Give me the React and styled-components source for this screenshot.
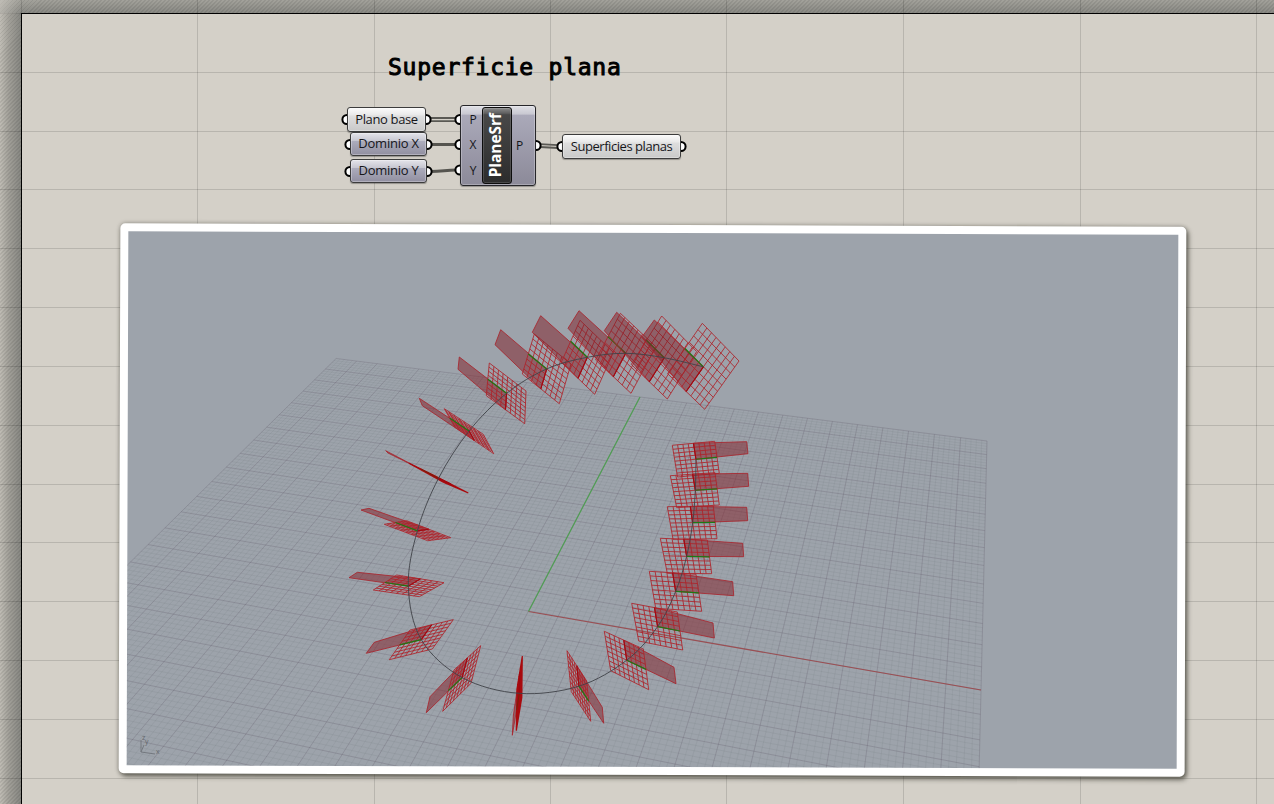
import React from "react";
import styled, { createGlobalStyle, css } from "styled-components";

const GlobalStyle = createGlobalStyle`
  html, body { margin: 0; padding: 0; overflow: hidden; background: #d4d0c8; }
  * { box-sizing: border-box; }
`;

const Canvas = styled.main`
  position: relative;
  width: 1274px;
  height: 804px;
  overflow: hidden;
  background: #d4d0c8;
  font-family: "Open Sans", "Noto Sans", sans-serif;
  color: #16161a;
`;

const hatch = css`
  repeating-linear-gradient(135deg, rgba(0,0,0,0.075) 0 1.4px, rgba(0,0,0,0) 1.4px 2.83px)
`;

const PageEdge = styled.div`
  position: absolute;
  inset: 0;
  display: grid;
  grid-template-columns: 21px 1fr;
  grid-template-rows: 13px 1fr;
`;

const TopMargin = styled.div`
  grid-column: 1 / 3;
  background: ${hatch}, linear-gradient(to bottom, #a3a29b, #888883);
`;

const LeftMargin = styled.div`
  background: ${hatch}, linear-gradient(to right, #c0bdb5, #a3a19a 40%, #868681);
`;

const Sheet = styled.div`
  border: solid #000;
  border-width: 1px 0 0 1px;
`;

const CornerFade = styled.div`
  position: absolute;
  left: 0;
  top: 0;
  width: 21px;
  height: 14px;
  background: linear-gradient(to right, rgba(212, 208, 200, 0.6), rgba(212, 208, 200, 0));
`;

const Overlay = styled.svg`
  position: absolute;
  left: 0;
  top: 0;
`;

const Title = styled.h1`
  position: absolute;
  left: 388px;
  top: 52px;
  margin: 0;
  font: 400 23px/30px "DejaVu Sans Mono", monospace;
  -webkit-text-stroke: 1px #000;
  letter-spacing: 0.75px;
  white-space: pre;
  color: #000;
`;

const silver = "linear-gradient(#fbfbfb, #e9e9e9 30%, #dedede 35%, #c9c9c9)";
const violet = "linear-gradient(#e4e4ea, #c6c6d0 36%, #acacbc 38%, #918fa0)";

const Param = styled.div`
  position: absolute;
  left: ${(p) => p.$x}px;
  top: ${(p) => p.$y}px;
  width: ${(p) => p.$w}px;
  height: ${(p) => p.$h || 25}px;
  display: flex;
  align-items: center;
  justify-content: center;
  padding-bottom: 2px;
  border: 1px solid #3c3c3c;
  border-radius: 3px;
  background: ${(p) => (p.$violet ? violet : silver)};
  box-shadow: inset 0 0 0 1px rgba(255, 255, 255, 0.3), 0 1px 1px rgba(0, 0, 0, 0.3);
  font-size: 13px;
  letter-spacing: ${(p) => p.$track || 0}px;
  white-space: nowrap;
`;

const Component = styled.section`
  position: absolute;
  left: 460px;
  top: 105px;
  width: 76px;
  height: 81px;
  display: grid;
  grid-template-columns: 21px 30px 1fr;
  align-items: stretch;
  padding: 1px 0 1px 0;
  border: 1px solid #26262a;
  border-radius: 3px;
  background: linear-gradient(#e0e0e6, #c9c9d2 10%, #aaa9b9 12%, #8c8a99);
  box-shadow: inset 0 0 0 1px rgba(255, 255, 255, 0.25), 0 1px 1px rgba(0, 0, 0, 0.3);
`;

const Ports = styled.div`
  display: flex;
  flex-direction: column;
  justify-content: space-around;
  align-items: center;
  font-size: 12px;
  line-height: 16px;
  padding-left: ${(p) => (p.$input ? 3 : 0)}px;
  padding-right: ${(p) => (p.$input ? 0 : 8)}px;
`;

const Badge = styled.div`
  display: flex;
  align-items: center;
  justify-content: center;
  padding-right: 3px;
  border: 1px solid #0d0d0d;
  border-radius: 3px;
  background: linear-gradient(#8a8a8a, #606060 7%, #484848 9%, #2c2c2c);
  box-shadow: inset 0 0 0 1px rgba(255, 255, 255, 0.14);
  color: #fff;
`;

const BadgeText = styled.span`
  writing-mode: vertical-rl;
  transform: rotate(180deg);
  font: 700 15.4px/20px "Open Sans", "Noto Sans", sans-serif;
`;

const Frame = styled.figure`
  position: absolute;
  left: 120px;
  top: 225px;
  width: 1066px;
  height: 550px;
  margin: 0;
  border: 8px solid #fff;
  border-radius: 5px;
  background: #9da3ab;
  box-shadow: 2px 3px 5px rgba(30, 30, 20, 0.6), 0 0 4px rgba(30, 30, 20, 0.35);
  transform: translateX(-0.5px) rotate(0.18deg);
`;

const Viewport = styled.svg`
  display: block;
  width: 1050px;
  height: 534px;
`;

/* Projection of the construction plane, one unit being half the grid */
const project = (u, v) => {
  const w = 1 - 0.08657 * u + 0.30553 * v;
  return [
    (528.5 + 367.6 * u + 307 * v) / w,
    (611 + 19.27 * u - 92.7 * v) / w,
  ];
};

const segment = (a, b) =>
  `M${a[0].toFixed(2)} ${a[1].toFixed(2)}L${b[0].toFixed(2)} ${b[1].toFixed(2)}`;

const gridPath = (major) => {
  let d = "";
  for (let i = -70; i <= 70; i++) {
    if ((i % 5 === 0) !== major) continue;
    const t = i / 70;
    d += segment(project(t, -1), project(t, 1));
    d += segment(project(-1, t), project(1, t));
  }
  return d;
};

const MAJOR = gridPath(true);
const MINOR = gridPath(false);

/* m: four mesh corners, s: the two far corners of the shaded face */
const PLANES = [
  { m: [[672.3, 445.3], [714.7, 441.3], [719.3, 473.3], [677.5, 477]], s: [[746.7, 441.7], [748, 453.7]] },
  { m: [[670.3, 475.7], [715, 472.7], [719.3, 505], [676.7, 507.7]], s: [[747.7, 473.3], [748.7, 486.3]] },
  { m: [[667.3, 506.7], [713.3, 506], [717, 538.7], [673, 539.3]], s: [[746.7, 507.3], [747.7, 520.7]] },
  { m: [[660.3, 538.3], [707.3, 540], [711.7, 573.7], [667.3, 573.3]], s: [[742.7, 543.3], [743.7, 556.7]] },
  { m: [[649.3, 571.3], [696, 574.3], [701.7, 611.3], [655.7, 608.3]], s: [[732.7, 581.7], [733.7, 595.7]] },
  { m: [[631.7, 603.3], [677.3, 612], [682.7, 650], [638.7, 641]], s: [[713, 623], [714.3, 638]] },
  { m: [[604.3, 631.3], [643.3, 649], [648.7, 689.7], [610.7, 670.7]], s: [[674, 667.3], [676, 683.7]] },
  { m: [[567, 650.7], [586.7, 681], [590.7, 721.3], [571.3, 691.7]], s: [[602.3, 707.3], [603.7, 723.3]] },
  { m: [[522.3, 656], [517, 689], [516.3, 730.7], [521.8, 697.7]], s: [[513.3, 716], [512.3, 735.3]], thin: true },
  { m: [[480.7, 645.7], [454, 670], [442.7, 711.3], [471, 683.3]], s: [[430, 696.7], [426.3, 712.7]] },
  { m: [[453.3, 619.7], [410, 630], [389.3, 659.7], [432.3, 649]], s: [[374.3, 642.3], [366.3, 653.3]] },
  { m: [[444, 582.7], [396.7, 575], [373.3, 590], [419.3, 596.7]], s: [[357.3, 572.3], [349, 577.7]] },
  { m: [[450.7, 537.7], [406.7, 520.7], [384.3, 524.3], [427.7, 540.7]], s: [[369, 508.3], [361, 510]] },
  { m: [[468.3, 493], [433.3, 475], [409, 463.3], [443.3, 482.3]], s: [[388, 453], [385.7, 450.7]], thin: true },
  { m: [[493.7, 453.7], [455, 427.3], [444.3, 408.7], [483.3, 434.3]], s: [[422.3, 405.7], [419.3, 398.3]] },
  { m: [[524.7, 423.7], [486.3, 395.7], [489.3, 363], [526, 391]], s: [[458, 369.3], [459.3, 357]] },
  { m: [[559.3, 403.7], [522.3, 374], [534.3, 334], [571, 364]], s: [[495, 344.7], [500.7, 329.7]] },
  { m: [[594.7, 394.3], [561.3, 362.3], [580, 320.3], [613.3, 352.3]], s: [[532.3, 332.3], [540.7, 315.7]] },
  { m: [[631, 393.3], [595.6, 360], [620.4, 313.3], [655.8, 346.6]], s: [[568, 328.3], [579, 310.7]] },
  { m: [[667.3, 399], [631.3, 364.4], [661.7, 316], [696.7, 351.6]], s: [[604.3, 330.7], [616.7, 312.3]] },
  { m: [[704.7, 409.3], [667.6, 373.7], [702.3, 323.3], [739, 361]], s: [[641.7, 337.3], [654.3, 320]] },
];

const mix = (a, b, t) => [a[0] + (b[0] - a[0]) * t, a[1] + (b[1] - a[1]) * t];
const centre = (m) => mix(mix(m[0], m[1], 0.5), mix(m[3], m[2], 0.5), 0.5);

const CENTRES = PLANES.map((p) => centre(p.m));

const CURVE = CENTRES.reduce((d, p, i, all) => {
  if (i === 0) return `M${p[0]} ${p[1]}`;
  const a = all[Math.max(0, i - 2)];
  const b = all[i - 1];
  const c = all[Math.min(all.length - 1, i + 1)];
  return `${d}C${b[0] + (p[0] - a[0]) / 6} ${b[1] + (p[1] - a[1]) / 6} ${p[0] - (c[0] - b[0]) / 6} ${p[1] - (c[1] - b[1]) / 6} ${p[0]} ${p[1]}`;
}, "");

const Plane = ({ m, s, thin }) => {
  const c = centre(m);
  const top = mix(m[0], m[1], 0.5);
  const side = mix(m[1], m[2], 0.5);
  let mesh = "";
  for (let i = 0; i <= 8; i++) {
    const t = i / 8;
    mesh += segment(mix(m[0], m[1], t), mix(m[3], m[2], t));
    mesh += segment(mix(m[0], m[3], t), mix(m[1], m[2], t));
  }
  return (
    <g fill="none">
      <polygon
        points={[top, s[0], s[1], c].map((p) => p.join()).join(" ")}
        fill="rgba(130,30,38,0.5)"
        stroke="#a8262e"
        strokeWidth="0.85"
      />
      <path d={mesh} stroke={thin ? "#a80a0e" : "#ad2229"} strokeWidth={thin ? 1.2 : 0.85} />
      <path d={segment(c, top)} stroke="#a00810" strokeWidth="1.1" />
      <path
        d={segment(c, side)}
        stroke={thin ? "#6b2a08" : "#1c7a14"}
        strokeWidth={thin ? 0.8 : 1.2}
      />
    </g>
  );
};

const Scene = () => (
  <Viewport viewBox="127.5 233 1050 534">
    <g transform="rotate(-0.18 652.5 500)" fill="none">
      <path d={MINOR} stroke="rgba(75,85,95,0.1)" strokeWidth="0.8" />
      <path d={MAJOR} stroke="rgba(90,84,100,0.25)" strokeWidth="1" />
      <path d="M528.5 611.5L981 690" stroke="#9b4e52" strokeWidth="1.1" />
      <path d="M528.5 611.5L640 397" stroke="#4f9e52" strokeWidth="1.2" />
      {PLANES.map((p, i) => (
        <Plane key={i} {...p} />
      ))}
      <path d={CURVE} stroke="#3f4247" strokeWidth="0.9" />
      <path d="M141 752V740M141 752L155 754M141 752L144 745" stroke="#74787f" strokeWidth="1" />
      <g fill="#666a70" fontFamily="Liberation Sans, sans-serif" fontSize="7">
        <text x="142" y="740">z</text>
        <text x="145" y="744">y</text>
        <text x="156" y="754">x</text>
      </g>
    </g>
  </Viewport>
);

const COLUMNS = [21, 197, 374, 550, 726, 903, 1080, 1256];
const ROWS = Array.from({ length: 14 }, (_, i) => Math.floor(13.4 + 58.83 * i));

const CanvasGrid = () => (
  <Overlay width="1274" height="804" stroke="rgba(0,0,0,0.13)" shapeRendering="crispEdges">
    {COLUMNS.map((x) => (
      <path key={x} d={`M${x + 0.5} 0V804`} />
    ))}
    {ROWS.map((y) => (
      <path key={y} d={`M0 ${y + 0.5}H1274`} />
    ))}
  </Overlay>
);

const GRIPS = [
  [347, 119.5], [350, 144.5], [350, 171.5],
  [426, 119.5], [427, 144.5], [427, 171.5],
  [460, 119.5], [460, 144.5], [460, 170],
  [536, 145.5], [562, 146.5], [681, 146.5],
];

const Wires = () => (
  <Overlay width="1274" height="804" fill="none">
    <g stroke="#5a5954" strokeWidth="1.8">
      <path d="M430 118H456M430 121.2H456" />
      <path d="M540 144.2L558 145.2M540 147L558 148" />
    </g>
    <g stroke="#55544f" strokeWidth="3">
      <path d="M431 144.5H456" />
      <path d="M431 171.5C442 171.5 446 170 456 170" />
    </g>
    {GRIPS.map(([x, y]) => (
      <circle key={`${x}-${y}`} cx={x} cy={y} r="4.6" fill="#fff" stroke="#000" strokeWidth="2" />
    ))}
  </Overlay>
);

export default function App() {
  return (
    <>
      <GlobalStyle />
      <Canvas>
        <PageEdge>
          <TopMargin />
          <LeftMargin />
          <Sheet />
        </PageEdge>
        <CornerFade />
        <CanvasGrid />
        <Title>Superficie plana</Title>
        <Wires />
        <Param $x={347} $y={107} $w={79} $track={-0.35}>Plano base</Param>
        <Param $x={350} $y={132} $w={77} $h={24} $track={-0.25} $violet>Dominio X</Param>
        <Param $x={350} $y={159} $w={77} $h={24} $track={-0.25} $violet>Dominio Y</Param>
        <Component>
          <Ports $input>
            <span>P</span>
            <span>X</span>
            <span>Y</span>
          </Ports>
          <Badge>
            <BadgeText>PlaneSrf</BadgeText>
          </Badge>
          <Ports>
            <span>P</span>
          </Ports>
        </Component>
        <Param $x={562} $y={134} $w={119} $track={-0.45}>Superficies planas</Param>
        <Frame>
          <Scene />
        </Frame>
      </Canvas>
    </>
  );
}
